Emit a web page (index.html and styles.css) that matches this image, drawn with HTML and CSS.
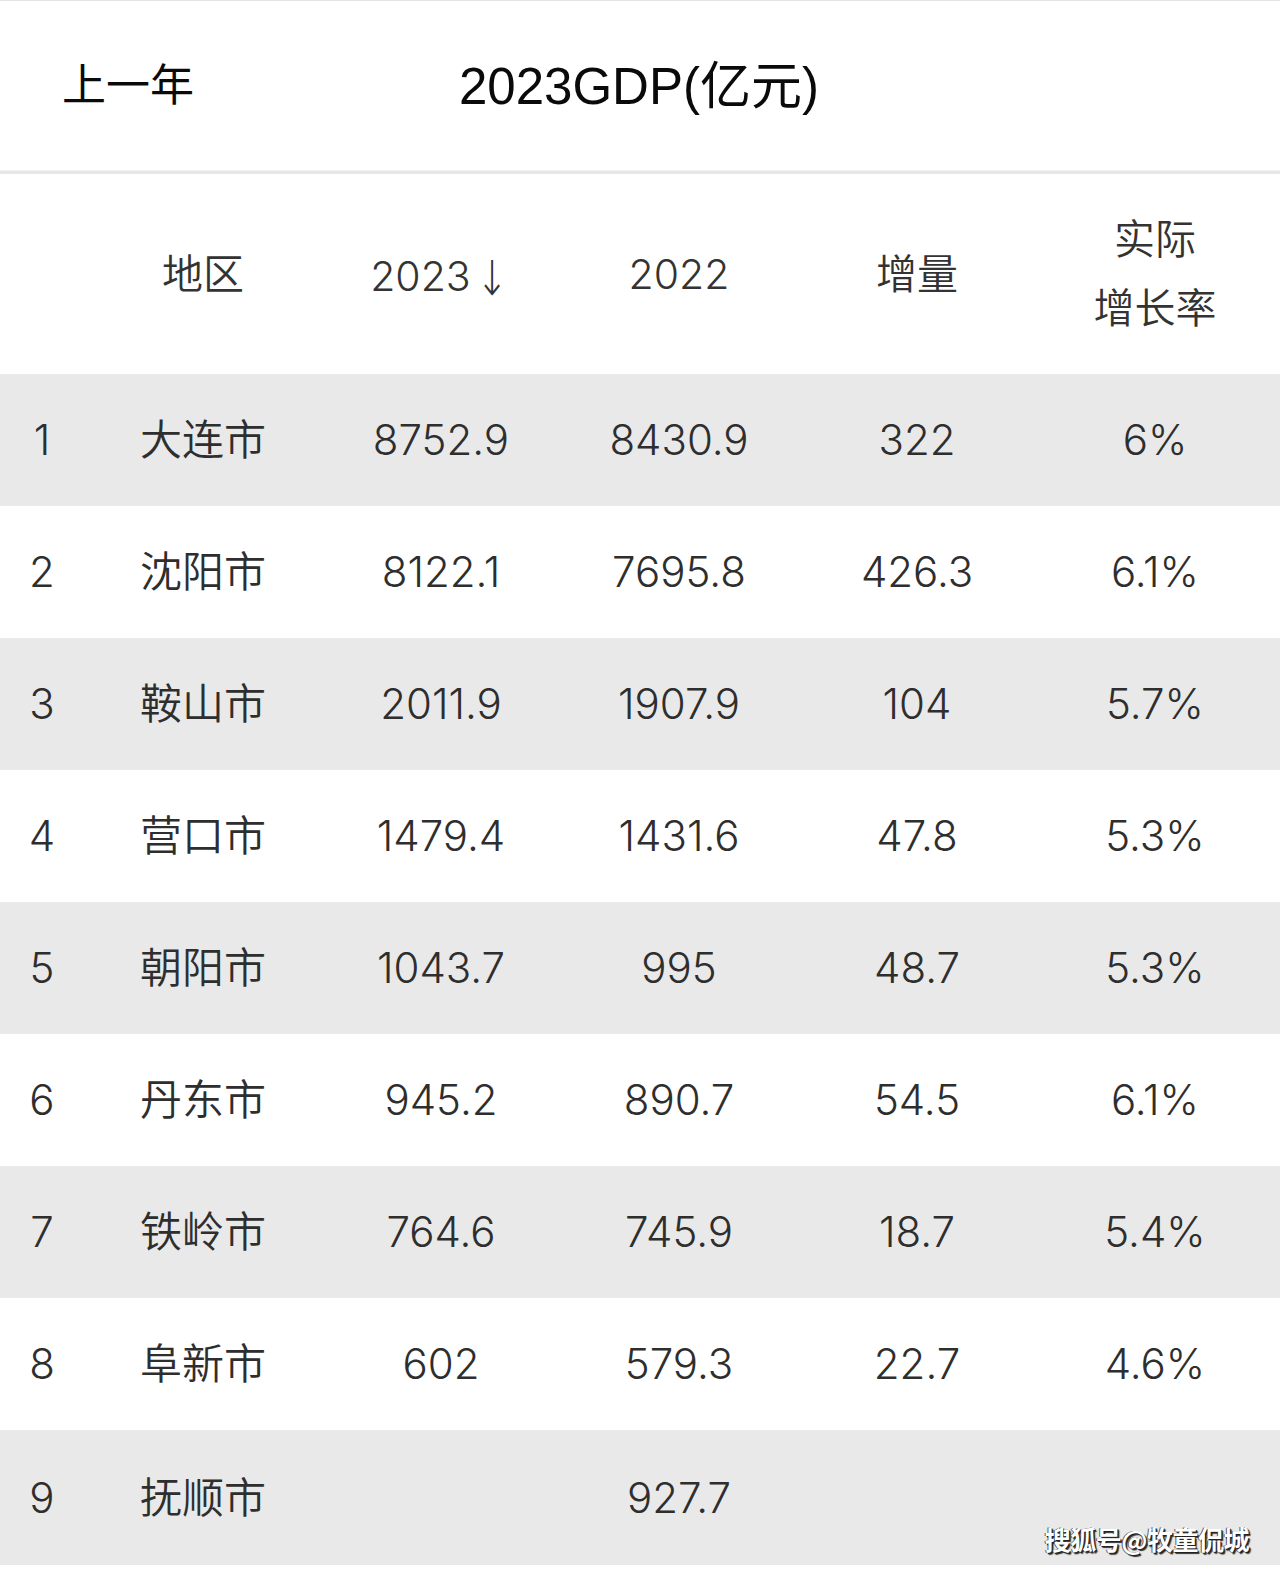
FILE: index.html
```html
<!DOCTYPE html>
<html lang="zh-CN">
<head>
<meta charset="utf-8">
<title>2023GDP</title>
<link rel="stylesheet" href="styles.css">
</head>
<body>
<div class="page">
  <div class="title">
    <span class="t-left">上一年</span>
    <span class="t-main">2023GDP(亿元)</span>
  </div>
  <div class="sep"></div>
  <div class="table">
    <div class="row head">
      <div class="cell"></div>
      <div class="cell">地区</div>
      <div class="cell">2023<span class="arrow">↓</span></div>
      <div class="cell">2022</div>
      <div class="cell">增量</div>
      <div class="cell two"><span>实际</span><span>增长率</span></div>
    </div>
    <div class="row odd">
      <div class="cell">1</div><div class="cell">大连市</div><div class="cell">8752.9</div><div class="cell">8430.9</div><div class="cell">322</div><div class="cell">6%</div>
    </div>
    <div class="row">
      <div class="cell">2</div><div class="cell">沈阳市</div><div class="cell">8122.1</div><div class="cell">7695.8</div><div class="cell">426.3</div><div class="cell">6.1%</div>
    </div>
    <div class="row odd">
      <div class="cell">3</div><div class="cell">鞍山市</div><div class="cell">2011.9</div><div class="cell">1907.9</div><div class="cell">104</div><div class="cell">5.7%</div>
    </div>
    <div class="row">
      <div class="cell">4</div><div class="cell">营口市</div><div class="cell">1479.4</div><div class="cell">1431.6</div><div class="cell">47.8</div><div class="cell">5.3%</div>
    </div>
    <div class="row odd">
      <div class="cell">5</div><div class="cell">朝阳市</div><div class="cell">1043.7</div><div class="cell">995</div><div class="cell">48.7</div><div class="cell">5.3%</div>
    </div>
    <div class="row">
      <div class="cell">6</div><div class="cell">丹东市</div><div class="cell">945.2</div><div class="cell">890.7</div><div class="cell">54.5</div><div class="cell">6.1%</div>
    </div>
    <div class="row odd">
      <div class="cell">7</div><div class="cell">铁岭市</div><div class="cell">764.6</div><div class="cell">745.9</div><div class="cell">18.7</div><div class="cell">5.4%</div>
    </div>
    <div class="row">
      <div class="cell">8</div><div class="cell">阜新市</div><div class="cell">602</div><div class="cell">579.3</div><div class="cell">22.7</div><div class="cell">4.6%</div>
    </div>
    <div class="row odd last">
      <div class="cell">9</div><div class="cell">抚顺市</div><div class="cell"></div><div class="cell">927.7</div><div class="cell"></div><div class="cell"></div>
      <div class="watermark">搜狐号@牧童侃城</div>
    </div>
  </div>
</div>
</body>
</html>
```

FILE: styles.css
```css
html, body {
  margin: 0;
  padding: 0;
  background: #ffffff;
}

.page {
  width: 1280px;
  height: 1571px;
  background: #ffffff;
  font-family: Inter, "Noto Sans CJK SC", sans-serif;
  color: #2e2e2e;
  overflow: hidden;
}

.title {
  height: 170px;
  border-top: 1px solid #e4e4e4;
  display: flex;
  align-items: center;
  padding-left: 62px;
  padding-bottom: 7px;
  box-sizing: border-box;
  font-family: "Liberation Sans", "Noto Sans CJK SC", sans-serif;
  color: #0a0a0a;
}

.t-left {
  width: 397px;
  font-size: 44px;
}

.t-main {
  font-size: 51px;
  letter-spacing: 0;
}

.sep {
  height: 4px;
  background: #e7e7e7;
  border-top: 1px solid #f2f2f2;
  box-sizing: border-box;
}

.table {
  display: flex;
  flex-direction: column;
}

.row {
  display: grid;
  grid-template-columns: 84px repeat(5, 238px);
  height: 132px;
  align-items: center;
  font-size: 42px;
  font-weight: 350;
  position: relative;
}

.row.odd {
  background: #e9e9e9;
}

.row.last {
  height: 135px;
}

.row.head {
  height: 200px;
  font-size: 41px;
  color: #333333;
}

.cell {
  text-align: center;
  white-space: nowrap;
  line-height: 1;
}

.arrow {
  font-family: "DejaVu Sans", sans-serif;
  font-size: 48px;
  font-weight: 300;
  margin-left: 1px;
  display: inline-block;
  transform: scaleX(0.8) translateY(4px);
}

.two {
  display: flex;
  flex-direction: column;
  align-items: center;
  gap: 28px;
}

.watermark {
  position: absolute;
  right: 31px;
  top: 96px;
  font-size: 26px;
  line-height: 1;
  color: #ffffff;
  font-family: "Noto Sans CJK SC", sans-serif;
  font-weight: 700;
  text-shadow: 1px 1px 0 #222, 2px 2px 1px #333, -1px 0 0 #555;
  letter-spacing: -0.5px;
}
```
